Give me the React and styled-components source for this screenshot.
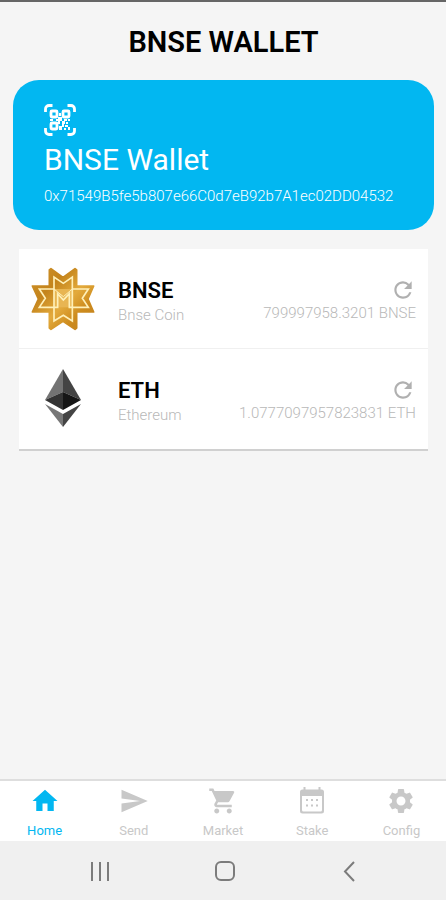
import { useState } from "react";
import styled, { createGlobalStyle } from "styled-components";
import {
  MdHome,
  MdSend,
  MdShoppingCart,
  MdSettings,
  MdRefresh,
} from "react-icons/md";

const coins = [
  {
    symbol: "BNSE",
    name: "Bnse Coin",
    balance: "799997958.3201 BNSE",
    Logo: BnseLogo,
  },
  {
    symbol: "ETH",
    name: "Ethereum",
    balance: "1.0777097957823831 ETH",
    Logo: EthLogo,
  },
];

const tabs = [
  { label: "Home", Icon: MdHome },
  { label: "Send", Icon: MdSend },
  { label: "Market", Icon: MdShoppingCart },
  { label: "Stake", Icon: CalendarIcon },
  { label: "Config", Icon: MdSettings },
];

export default function App() {
  const [activeTab, setActiveTab] = useState("Home");

  return (
    <>
      <GlobalStyle />
      <Screen>
        <Content>
          <Title>BNSE WALLET</Title>
          <WalletCard>
            <QrButton type="button" aria-label="Show QR code">
              <QrIcon />
            </QrButton>
            <WalletName>BNSE Wallet</WalletName>
            <Address>0x71549B5fe5b807e66C0d7eB92b7A1ec02DD04532</Address>
          </WalletCard>
          <CoinList>
            {coins.map(({ symbol, name, balance, Logo }) => (
              <CoinRow key={symbol}>
                <Logo />
                <CoinText>
                  <CoinSymbol>{symbol}</CoinSymbol>
                  <CoinDetail>{name}</CoinDetail>
                </CoinText>
                <CoinBalance>
                  <RefreshButton type="button" aria-label={`Refresh ${symbol}`}>
                    <MdRefresh size={26} />
                  </RefreshButton>
                  <CoinDetail>{balance}</CoinDetail>
                </CoinBalance>
              </CoinRow>
            ))}
          </CoinList>
        </Content>
        <TabBar>
          {tabs.map(({ label, Icon }) => (
            <Tab
              key={label}
              type="button"
              $active={label === activeTab}
              onClick={() => setActiveTab(label)}
            >
              <Icon size={30} />
              {label}
            </Tab>
          ))}
        </TabBar>
        <SystemBar>
          <SystemButton type="button" aria-label="Recent apps">
            <svg width="24" height="24" viewBox="0 0 24 24">
              <path d="M4 3v19M12 3v19M20 3v19" />
            </svg>
          </SystemButton>
          <SystemButton type="button" aria-label="Home screen">
            <svg width="24" height="24" viewBox="0 0 24 24">
              <rect x="3" y="3" width="18" height="18" rx="5" />
            </svg>
          </SystemButton>
          <SystemButton type="button" aria-label="Back">
            <svg width="24" height="24" viewBox="0 0 24 24">
              <path d="M16 3L7 12.500L16 22" />
            </svg>
          </SystemButton>
        </SystemBar>
      </Screen>
    </>
  );
}

function QrIcon() {
  return (
    <svg width="32" height="32" viewBox="0 0 32 32" fill="none" stroke="#fff">
      <path
        d="M1.500 8V5a3.500 3.500 0 0 1 3.500-3.500H8.500M23.500 1.500H27A3.500 3.500 0 0 1 30.500 5V8M30.500 24v3a3.500 3.500 0 0 1-3.500 3.500H23.500M8.500 30.500H5A3.500 3.500 0 0 1 1.500 27V24"
        strokeWidth="2.800"
      />
      <g strokeWidth="2.800">
        <rect x="7" y="7" width="6" height="6" rx="1" />
        <rect x="19" y="7" width="6" height="6" rx="1" />
        <rect x="7" y="19" width="6" height="6" rx="1" />
      </g>
      <path
        d="M15 9h2v3h-2zM14 13h4v4h-2v3h-2v-3h-2v-2h2zM6 15h3v2H6zM20 15h3v2h-3zM24 15h2v2h-2zM18 17h3v3h-3zM22 18h2v2h-2zM15 22h3v-2h2v3h-2v3h-3zM21 21h3v2h-3zM24 23h2v3h-2zM20 24h2v2h-2z"
        fill="#fff"
        stroke="none"
      />
    </svg>
  );
}

function CalendarIcon({ size }) {
  return (
    <svg width={size} height={size} viewBox="0 0 30 30" fill="currentColor">
      <path
        fillRule="evenodd"
        d="M6.500 1h2v2.500h13V1h2v2.500h1a2.500 2.500 0 0 1 2.500 2.500v19a2.500 2.500 0 0 1-2.500 2.500h-19A2.500 2.500 0 0 1 3 25V6a2.500 2.500 0 0 1 2.500-2.500h1zM5 10v14a1.500 1.500 0 0 0 1.500 1.500h17A1.500 1.500 0 0 0 25 24V10z"
      />
      <path d="M9 13h2v2H9zM14 13h2v2h-2zM19 13h2v2h-2zM9 18.500h2v2H9zM14 18.500h2v2h-2zM19 18.500h2v2h-2z" />
    </svg>
  );
}

function BnseLogo() {
  return (
    <svg width="64" height="64" viewBox="0 0 192 192" aria-hidden="true">
      <defs>
        <linearGradient id="gold" x1="0" y1="0" x2="1" y2="1">
          <stop offset="0" stopColor="#cf922a" />
          <stop offset="0.300" stopColor="#c4841c" />
          <stop offset="0.550" stopColor="#e3aa3c" />
          <stop offset="0.750" stopColor="#cd8b1d" />
          <stop offset="1" stopColor="#c08020" />
        </linearGradient>
      </defs>
      <path
        d="M60 5L96 31L132 5L137 9V57H188L171 96L188 135H137V183L132 187L96 163L60 187L55 183V135H4L22 96L4 57H55V9Z"
        fill="url(#gold)"
        stroke="url(#gold)"
        strokeWidth="5"
        strokeLinejoin="round"
      />
      <path d="M69 66H124V121H69Z" fill="#e8b552" />
      <g fill="none" stroke="#fff0b8" strokeWidth="5">
        <path d="M69 121V30L97 49L124 30V162L97 145L69 162V121" />
        <path d="M69 66H25L43 94L25 121H80V80L97 99L115 80V121H172L154 94L172 66H124" />
        <path d="M69 66L97 89L124 66" strokeWidth="3" />
      </g>
    </svg>
  );
}

function EthLogo() {
  return (
    <svg width="64" height="64" viewBox="0 0 64 64" aria-hidden="true">
      <path d="M32 2L14 33L32 25Z" fill="#737373" />
      <path d="M32 2L50 33L32 25Z" fill="#444" />
      <path d="M14 33L32 25V43Z" fill="#343434" />
      <path d="M50 33L32 25V43Z" fill="#161616" />
      <path d="M14 37L32 47V60Z" fill="#777" />
      <path d="M50 37L32 47V60Z" fill="#444" />
    </svg>
  );
}

const GlobalStyle = createGlobalStyle`
  * {
    box-sizing: border-box;
  }

  body {
    margin: 0;
    background: #f5f5f5;
    font-family: Roboto, "Liberation Sans", sans-serif;
  }

  button {
    padding: 0;
    border: 0;
    background: none;
    font: inherit;
    cursor: pointer;
  }

  svg {
    display: block;
    flex-shrink: 0;
  }
`;

const Screen = styled.div`
  display: flex;
  flex-direction: column;
  min-height: 100vh;
  border-top: 2px solid #666;
`;

const Content = styled.main`
  flex: 1;
  padding: 20px 12px 20px 13px;
`;

const Title = styled.h1`
  margin: 0 0 18px;
  font-size: 29px;
  font-weight: 600;
  line-height: 40px;
  text-align: center;
  color: #000;
`;

const WalletCard = styled.section`
  padding: 24px 31px;
  border-radius: 26px;
  background: #02b7f1;
  color: #fff;
`;

const QrButton = styled.button`
  display: block;
`;

const WalletName = styled.h2`
  margin: 6px 0 8px;
  font-size: 30px;
  font-weight: 400;
  line-height: 36px;
`;

const Address = styled.p`
  margin: 0;
  font-size: 15px;
  font-weight: 300;
  line-height: 20px;
`;

const CoinList = styled.ul`
  margin: 19px 6px 0;
  padding: 0;
  list-style: none;
  background: #fff;
  border-bottom: 2px solid #d0d0d0;
`;

const CoinRow = styled.li`
  display: flex;
  align-items: center;
  height: 100px;
  padding: 0 12px;

  & + & {
    box-shadow: 0 -1px #f0f0f0;
  }
`;

const CoinText = styled.div`
  flex: 1;
  margin-left: 23px;
  padding-top: 4px;
`;

const CoinSymbol = styled.h3`
  margin: 0;
  font-size: 22px;
  font-weight: 600;
  line-height: 28px;
  color: #000;
`;

const CoinDetail = styled.p`
  margin: 0;
  font-size: 15px;
  font-weight: 300;
  line-height: 20px;
  color: #b8b8b8;
`;

const CoinBalance = styled.div`
  display: flex;
  flex-direction: column;
  align-items: flex-end;
  padding-top: 2px;
`;

const RefreshButton = styled.button`
  color: #b0b0b0;
`;

const TabBar = styled.nav`
  display: flex;
  border-top: 2px solid #dedede;
  background: #fff;
`;

const Tab = styled.button`
  display: flex;
  flex: 1;
  flex-direction: column;
  align-items: center;
  gap: 7px;
  padding: 5px 0 2px;
  font-size: 13px;
  line-height: 16px;
  color: ${(props) => (props.$active ? "#02b7f1" : "#c8c8c8")};
`;

const SystemBar = styled.footer`
  display: flex;
  justify-content: center;
  gap: 101px;
  padding: 18px 0 17px 3px;
  background: #f0f0f0;
`;

const SystemButton = styled.button`
  svg {
    fill: none;
    stroke: #7c7c7c;
    stroke-width: 2;
  }
`;
